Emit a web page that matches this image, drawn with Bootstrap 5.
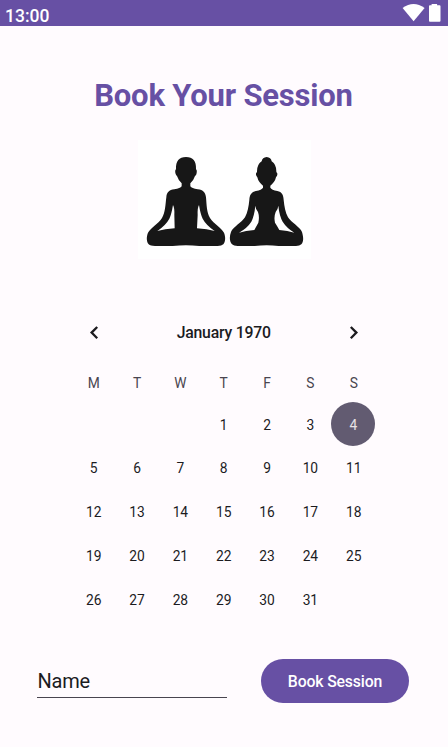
<!DOCTYPE html>
<html lang="en">
<head>
<meta charset="utf-8">
<meta name="viewport" content="width=device-width, initial-scale=1">
<title>Book Your Session</title>
<link rel="stylesheet" href="https://cdn.jsdelivr.net/npm/bootstrap@5.3.0/dist/css/bootstrap.min.css">
<style>
body{font-family:Roboto,"Liberation Sans",sans-serif;background:#fffbfe;color:#1c1b1f;height:747px;overflow:hidden}
.status-bar{height:26px;background:#6750a4;padding:5px 6px 0 5px}
.status-icons{margin-top:-2px}
.clock{font-size:17.5px;line-height:23px;font-weight:500}
.page-title{margin-top:51px;font-size:31px;line-height:38px;letter-spacing:-.2px;text-indent:-1px;color:#6750a4}
.art{width:173px;height:119px;margin:25px 0 0 138px;background:#fff}
.calendar{width:303.4px;margin:50px 0 0 72px}
.cal-head{height:47px}
.cal-title{font-size:15.8px;line-height:20px;font-weight:500;letter-spacing:-.22px}
.arrow-btn{width:43.3px;height:44px}
.week{display:grid;grid-template-columns:repeat(7,1fr);height:43.9px}
.week>span{display:flex;align-items:center;justify-content:center;font-size:13.8px;letter-spacing:-.05px;padding-top:2px}
.week.labels{height:46px;padding-top:6px;color:#49454f}
.week>.picked{background:#625b71;color:#e6e1e5;border-radius:50%;margin-left:-.7px}
.booking{padding:0 39px 0 37px;margin-top:38px}
.name-field,.name-field:focus{width:190px;height:39px;font-size:20px;letter-spacing:-.2px;border-bottom:1px solid #49454f!important;background:transparent;color:#1c1b1f;padding:5px 0 0 .5px}
.name-field::placeholder{color:#1c1b1f;opacity:1}
.book-btn,.book-btn:hover{width:148px;height:44px;background:#6750a4;color:#fff;font-size:15.8px;letter-spacing:-.15px;font-weight:500;padding-top:1px!important}
</style>
<script src="https://cdn.jsdelivr.net/npm/bootstrap@5.3.0/dist/js/bootstrap.bundle.min.js"></script>
</head>
<body>
<header class="status-bar d-flex justify-content-between text-white">
  <span class="clock">13:00</span>
  <svg class="status-icons" width="40" height="20" viewBox="402 3 40 20" fill="#fff"><path d="M402.6 8Q413.5 -.2 424.6 8L413.6 21.2Z"/><path d="M429 6.2q0-.9.9-.9h1.7V4h5.5v1.3h2.5q.9 0 .9.9v14.6q0 1-.9 1h-9.7q-.9 0-.9-1Z"/></svg>
</header>
<main>
  <h1 class="page-title text-center fw-bold mb-0">Book Your Session</h1>
  <svg class="art d-block" viewBox="138 140 173 119" fill="#171717" role="img" aria-label="Two people meditating">
    <g transform="translate(130 136) scale(.33333)">
      <path d="M168 63C147 63 137 75 138 99Q134 103 136 111Q138 118 141 120Q146 135 155 142V151Q151 157 133 160C117 162 110 170 109 184C106 207 106 230 96 246C84 264 62 276 54 290C49 302 49 317 56 325Q61 330 75 330H128Q168 325 208 330H263Q275 330 280 325C287 317 287 302 282 290C274 276 252 264 240 246C230 230 230 207 228 184C226 170 220 162 203 160Q185 157 181 151V142Q190 135 195 120Q199 118 200 111Q202 103 198 99C199 75 189 63 168 63ZM129 207Q134 215 133 237L134 277Q104 279 82 285Q108 267 118 248Q124 237 129 207ZM207 207Q212 237 218 248Q228 267 254 285Q232 279 201 277L203 237Q202 215 207 207Z" fill-rule="evenodd"/>
    </g>
    <g transform="translate(220 136) scale(.33333)">
      <path d="M140 63Q127 64 125 76Q110 86 111 109Q106 111 109 119L112 124Q115 138 129 149V155Q125 162 108 165C94 168 89 176 88 192C86 211 83 230 75 244C66 259 39 273 33 288C28 301 28 317 36 325Q41 330 53 330H104Q140 325 176 330H228Q239 330 244 325C252 317 250 301 246 288C240 273 213 259 204 244C196 230 193 211 191 192C190 176 186 168 172 165Q155 162 151 155V149Q165 138 168 124L171 119Q174 111 169 109Q170 86 155 76Q153 64 140 63ZM106 209Q107 220 114 228Q119 243 115 260Q110 269 103 282Q77 284 57 290Q82 276 94 257Q103 239 106 209ZM175 209Q178 239 188 257Q200 276 223 290Q203 284 178 282Q171 269 165 260Q161 243 167 228Q174 220 175 209Z" fill-rule="evenodd"/>
    </g>
  </svg>
  <section class="calendar">
    <div class="cal-head d-flex justify-content-between align-items-center">
      <button class="btn border-0 p-0 arrow-btn d-flex align-items-center justify-content-center" aria-label="Previous month"><svg width="14" height="16" viewBox="0 0 14 16" fill="none" stroke="#1c1b1f" stroke-width="2.3"><path d="M10.2 2 4.6 7.6l5.6 5.6"/></svg></button>
      <span class="cal-title">January 1970</span>
      <button class="btn border-0 p-0 arrow-btn d-flex align-items-center justify-content-center" aria-label="Next month"><svg width="14" height="16" viewBox="0 0 14 16" fill="none" stroke="#1c1b1f" stroke-width="2.3"><path d="m3.8 2 5.6 5.6-5.6 5.6"/></svg></button>
    </div>
    <div class="week labels"><span>M</span><span>T</span><span>W</span><span>T</span><span>F</span><span>S</span><span>S</span></div>
    <div class="week"><span></span><span></span><span></span><span>1</span><span>2</span><span>3</span><span class="picked">4</span></div>
    <div class="week"><span>5</span><span>6</span><span>7</span><span>8</span><span>9</span><span>10</span><span>11</span></div>
    <div class="week"><span>12</span><span>13</span><span>14</span><span>15</span><span>16</span><span>17</span><span>18</span></div>
    <div class="week"><span>19</span><span>20</span><span>21</span><span>22</span><span>23</span><span>24</span><span>25</span></div>
    <div class="week"><span>26</span><span>27</span><span>28</span><span>29</span><span>30</span><span>31</span><span></span></div>
  </section>
  <form class="booking d-flex justify-content-between">
    <input class="name-field border-0 rounded-0" type="text" placeholder="Name" aria-label="Name">
    <button type="button" class="btn book-btn rounded-pill border-0 p-0">Book Session</button>
  </form>
</main>
</body>
</html>
